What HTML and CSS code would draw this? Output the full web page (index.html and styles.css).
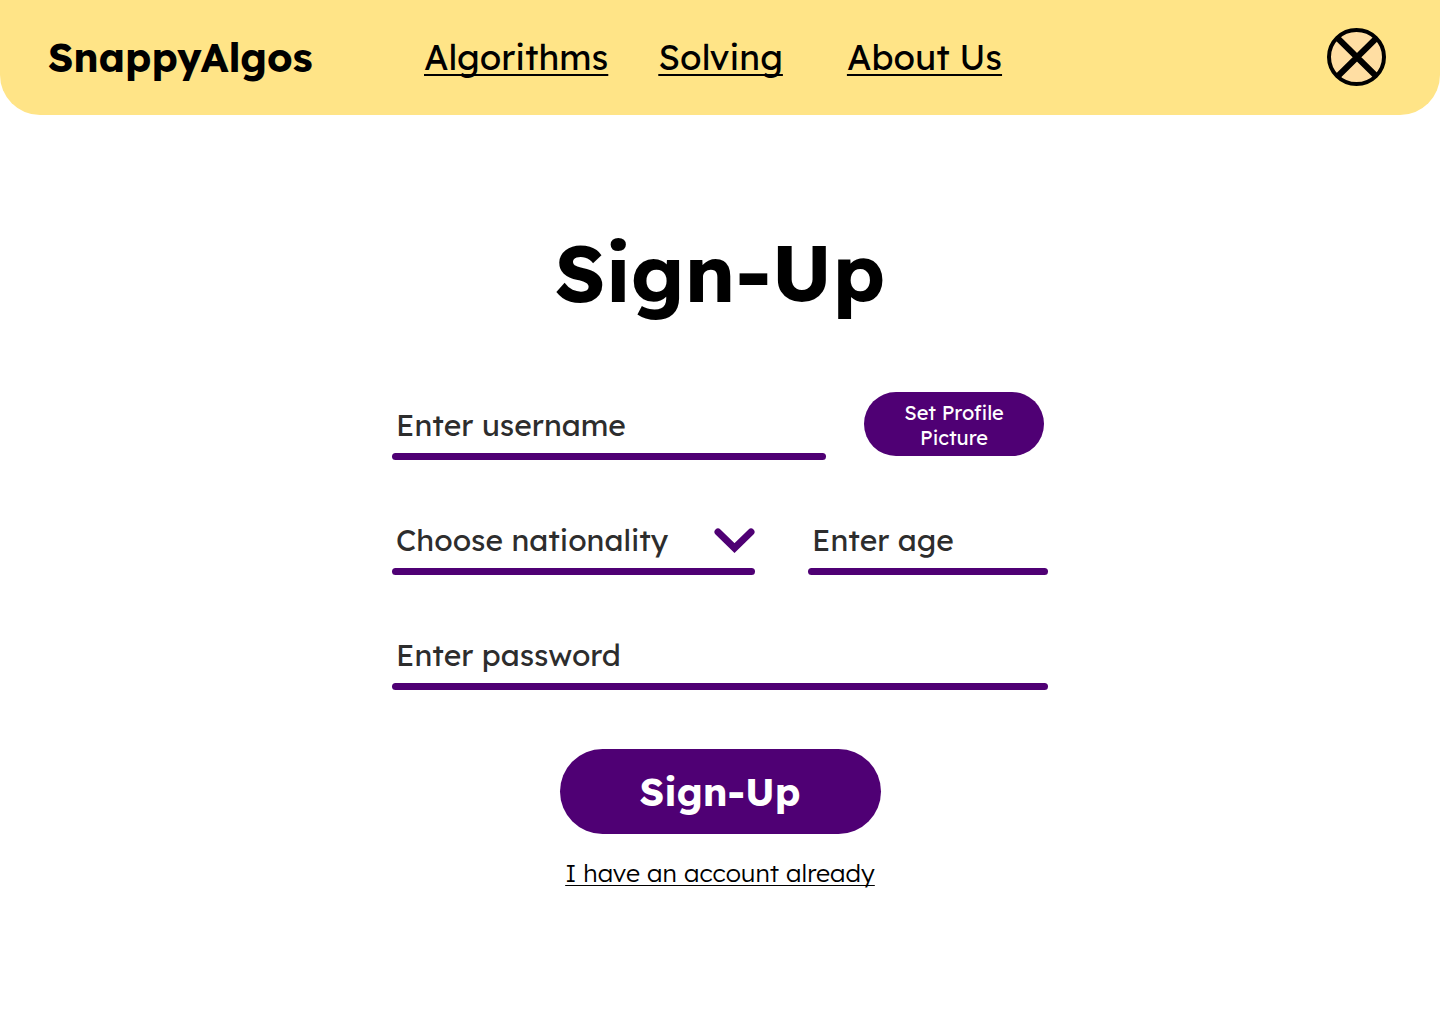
FILE: index.html
```html
<!DOCTYPE html>
<html lang="en">
<head>
<meta charset="utf-8">
<meta name="viewport" content="width=device-width, initial-scale=1">
<title>SnappyAlgos – Sign-Up</title>
<link rel="stylesheet" href="styles.css">
</head>
<body>
<header class="site-header">
  <div class="brand">SnappyAlgos</div>
  <nav class="nav">
    <a class="nav-algorithms" href="#algorithms">Algorithms</a>
    <a class="nav-solving" href="#solving">Solving</a>
    <a class="nav-about" href="#about">About Us</a>
  </nav>
  <button class="close" type="button" aria-label="Close">
    <svg viewBox="0 0 59 58" aria-hidden="true"><ellipse cx="29.5" cy="29" rx="27.500" ry="27" fill="#ffdea3" stroke="#000" stroke-width="4"/><path d="M10.500 10 49.500 48.500M49.500 10 10.500 48.500" stroke="#000" stroke-width="6"/></svg>
  </button>
</header>
<main class="signup">
  <h1 class="title">Sign-Up</h1>
  <form class="form">
    <div class="row row-user">
      <div class="control"><input class="field" type="text" placeholder="Enter username" aria-label="Username"></div>
      <button class="picture" type="button">Set Profile<br>Picture</button>
    </div>
    <div class="row row-details">
      <div class="control control-select">
        <select class="field" aria-label="Nationality"><option>Choose nationality</option></select>
        <svg class="chevron" viewBox="0 0 42 26" aria-hidden="true"><path d="M5 4 21.500 20 38 4" fill="none" stroke="#4f0074" stroke-width="7" stroke-linecap="round"/></svg>
      </div>
      <div class="control"><input class="field" type="text" inputmode="numeric" placeholder="Enter age" aria-label="Age"></div>
    </div>
    <div class="row">
      <div class="control"><input class="field" type="password" placeholder="Enter password" aria-label="Password"></div>
    </div>
    <button class="submit" type="submit">Sign-Up</button>
  </form>
  <a class="login" href="#login">I have an account already</a>
</main>
</body>
</html>
```

FILE: styles.css
```css
* { box-sizing: border-box; }
body {
  margin: 0;
  background: #fff;
  color: #000;
  font-family: Lexend, "Open Sans", sans-serif;
}
a {
  color: inherit;
  text-underline-offset: 4px;
  text-decoration-thickness: 2px;
  text-decoration-skip-ink: none;
}
button, input, select { font: inherit; border: 0; padding: 0; }
button { cursor: pointer; }

.site-header {
  display: flex;
  align-items: center;
  height: 115px;
  padding: 0 54px 2px 48px;
  background: #ffe487;
  border-radius: 0 0 40px 40px;
}
.brand { width: 376px; font-size: 40px; font-weight: 700; }
.nav { display: flex; flex: 1; font-size: 35px; }
.nav-algorithms { margin-right: 50px; }
.nav-solving { margin-right: 64px; }
.close { width: 59px; height: 58px; background: none; }
.close svg { display: block; }

.signup {
  display: flex;
  flex-direction: column;
  align-items: center;
  padding: 103px 24px 48px;
}
.title { margin: 0; font-size: 80px; line-height: 108px; font-weight: 700; }
.form {
  display: flex;
  flex-direction: column;
  align-items: center;
  width: 100%;
  max-width: 656px;
  padding-top: 66px;
}
.row { display: flex; width: 100%; height: 68px; margin-bottom: 47px; }
.row-user { gap: 38px; padding-right: 4px; }
.row-details { gap: 53px; }
.control {
  position: relative;
  display: flex;
  flex: 1;
  flex-direction: column;
  min-width: 0;
}
.control::after {
  content: "";
  height: 7px;
  border-radius: 4px;
  background: #4f0074;
}
.control-select { flex: 0 0 363px; }
.field {
  width: 100%;
  height: 61px;
  padding: 4px 4px 0;
  font-size: 30px;
  color: #2d2d2d;
  appearance: none;
  background: none;
}
.field::placeholder { color: #2d2d2d; opacity: 1; }
.chevron { position: absolute; right: 0; top: 21px; width: 42px; pointer-events: none; }
.picture {
  width: 180px;
  height: 64px;
  padding-top: 2px;
  border-radius: 32px;
  background: #4f0074;
  color: #fff;
  font-size: 20px;
  line-height: 25px;
}
.submit {
  width: 321px;
  height: 85px;
  margin-top: 12px;
  border-radius: 43px;
  background: #4f0074;
  color: #fff;
  font-size: 39px;
  font-weight: 700;
}
.login {
  margin-top: 22px;
  font-size: 25px;
  font-weight: 300;
  line-height: 34px;
  text-underline-offset: 3px;
  text-decoration-thickness: 1px;
}
```
